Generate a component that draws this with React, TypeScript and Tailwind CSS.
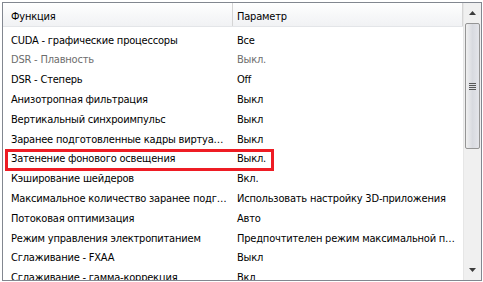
import React from "react";

const ROWS: { name: string; value: string; dim?: boolean; hl?: boolean }[] = [
  { name: "CUDA - графические процессоры", value: "Все" },
  { name: "DSR - Плавность", value: "Выкл.", dim: true },
  { name: "DSR - Степерь", value: "Off" },
  { name: "Анизотропная фильтрация", value: "Выкл" },
  { name: "Вертикальный синхроимпульс", value: "Выкл" },
  { name: "Заранее подготовленные кадры виртуальной реальности", value: "Выкл" },
  { name: "Затенение фонового освещения", value: "Выкл.", hl: true },
  { name: "Кэширование шейдеров", value: "Вкл." },
  { name: "Максимальное количество заранее подготовленных кадров", value: "Использовать настройку 3D-приложения" },
  { name: "Потоковая оптимизация", value: "Авто" },
  { name: "Режим управления электропитанием", value: "Предпочтителен режим максимальной производительности" },
  { name: "Сглаживание - FXAA", value: "Выкл" },
  { name: "Сглаживание - гамма-коррекция", value: "Вкл" },
];

export default function App() {
  return (
    <div
      className="w-[483px] h-[282px] bg-white p-[2px] overflow-hidden tracking-[-0.2px]"
      style={{ fontFamily: "Tahoma, 'DejaVu Sans Condensed', 'DejaVu Sans', sans-serif" }}
    >
      <div className="w-[480px] h-[279px] border border-[#828790] flex bg-white overflow-hidden">
        {/* список */}
        <div className="flex-1 min-w-0 flex flex-col">
          <div className="h-[24px] flex shrink-0 bg-gradient-to-b from-white via-[#f7f8f9] to-[#f1f2f4] border-b border-[#e3e5e8] text-[11px] text-black">
            <div className="w-[230px] flex items-center pt-[5px] pl-[8px] border-r border-[#d5d5d5]">Функция</div>
            <div className="flex-1 flex items-center pt-[5px] pl-[4px] border-r border-[#d5d5d5]">Параметр</div>
          </div>
          <div className="flex flex-col pt-[4px] text-[11px]">
            {ROWS.map((r) => (
              <div key={r.name} className="relative h-[19.8px] flex items-center shrink-0">
                <div className={`w-[230px] shrink-0 pl-[8px] pr-[6px] truncate ${r.dim ? "text-[#6d6d6d]" : "text-black"}`}>{r.name}</div>
                <div className={`flex-1 min-w-0 pl-[4px] pr-[6px] truncate ${r.dim ? "text-[#6d6d6d]" : "text-black"}`}>{r.value}</div>
                {r.hl && <div className="absolute left-[2px] top-[-1px] w-[269px] h-[22px] border-[3px] border-[#ee1c24]" />}
              </div>
            ))}
          </div>
        </div>
        {/* полоса прокрутки */}
        <div className="w-[18px] h-full bg-[#f0f0f0] border-l border-[#e6e6e6] flex flex-col shrink-0">
          <div className="h-[20px] flex items-center justify-center shrink-0">
            <svg width="7" height="4" viewBox="0 0 7 4"><path d="M3.5 0L7 4H0z" fill="#3c3c3c" /></svg>
          </div>
          <div className="mx-[1px] h-[126px] rounded-[2px] border border-[#959595] bg-gradient-to-r from-[#f0f0f0] via-[#d8dae0] to-[#e4e5ea] flex items-center justify-center shrink-0">
            <div className="flex flex-col gap-[1px]">
              <div className="w-[7px] h-[1px] bg-[#575757]" />
              <div className="w-[7px] h-[1px] bg-[#575757]" />
              <div className="w-[7px] h-[1px] bg-[#575757]" />
              <div className="w-[7px] h-[1px] bg-[#575757]" />
            </div>
          </div>
          <div className="flex-1" />
          <div className="h-[20px] flex items-center justify-center shrink-0">
            <svg width="7" height="4" viewBox="0 0 7 4"><path d="M0 0H7L3.5 4z" fill="#3c3c3c" /></svg>
          </div>
        </div>
      </div>
    </div>
  );
}
